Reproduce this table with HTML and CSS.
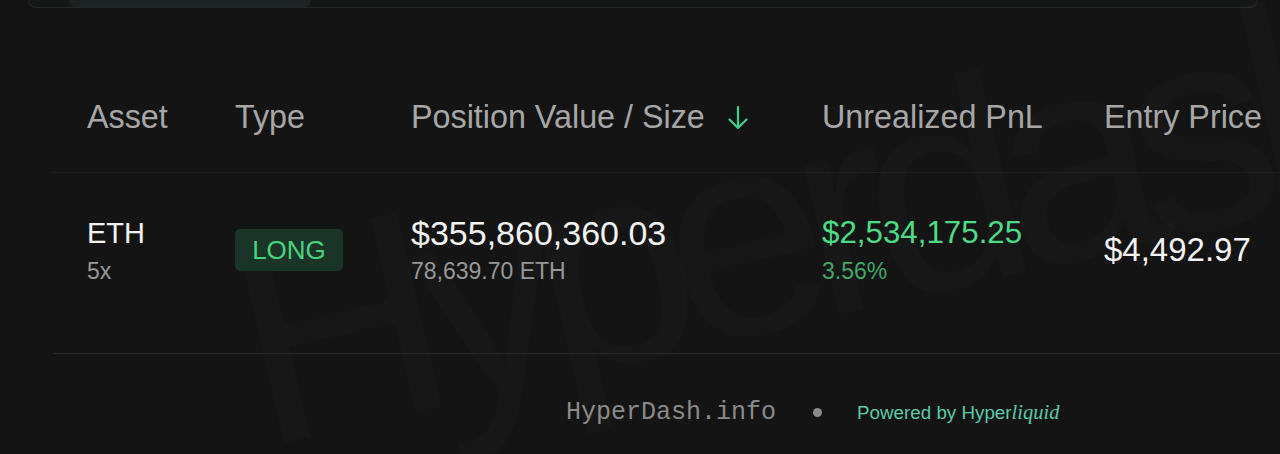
FILE: index.html
```html
<!DOCTYPE html>
<html>
<head>
<meta charset="utf-8">
<link rel="stylesheet" href="styles.css">
</head>
<body>
<div class="page">
  <div class="watermark">Hyperdash</div>
  <div class="topcard"><div class="tab"></div></div>
  <div class="table">
    <div class="row head">
      <div class="cell">Asset</div>
      <div class="cell">Type</div>
      <div class="cell sort">Position Value / Size
        <svg class="arrow" width="22" height="26" viewBox="0 0 22 26"><path d="M11 2 V23 M2.5 14.5 L11 23 L19.5 14.5" fill="none" stroke="#3ecf8e" stroke-width="2.2" stroke-linecap="round" stroke-linejoin="round"/></svg>
      </div>
      <div class="cell">Unrealized PnL</div>
      <div class="cell">Entry Price</div>
    </div>
    <div class="row data">
      <div class="cell stack">
        <div class="main sym">ETH</div>
        <div class="sub">5x</div>
      </div>
      <div class="cell"><span class="badge">LONG</span></div>
      <div class="cell stack">
        <div class="main big">$355,860,360.03</div>
        <div class="sub">78,639.70 ETH</div>
      </div>
      <div class="cell stack">
        <div class="main green">$2,534,175.25</div>
        <div class="sub dgreen">3.56%</div>
      </div>
      <div class="cell"><span class="main price">$4,492.97</span></div>
    </div>
  </div>
  <div class="footer">
    <span class="site">HyperDash.info</span>
    <span class="dot"></span>
    <span class="powered">Powered by Hyper<i>liquid</i></span>
  </div>
</div>
</body>
</html>
```

FILE: styles.css
```css
html, body {
  margin: 0;
  padding: 0;
  background: #141414;
}
.page {
  position: relative;
  width: 1280px;
  height: 454px;
  overflow: hidden;
  background: #141414;
  font-family: "Liberation Sans", Arial, sans-serif;
}
.watermark {
  position: absolute;
  left: 238px;
  top: 205px;
  font-family: "Liberation Sans", Arial, sans-serif;
  font-size: 290px;
  line-height: 290px;
  letter-spacing: -26px;
  color: rgba(255, 255, 255, 0.015);
  transform: rotate(-13deg);
  transform-origin: left center;
  white-space: nowrap;
  pointer-events: none;
}
.topcard {
  height: 7px;
  margin: 0 22px 0 28px;
  border: 1px solid #262828;
  border-top: none;
  border-radius: 0 0 12px 12px;
  background: #151717;
  display: flex;
  padding-left: 40px;
}
.tab {
  width: 242px;
  height: 7px;
  background: #1d2322;
  border-radius: 0 0 10px 10px;
}
.table {
  margin-top: 54px;
  margin-left: 53px;
  position: relative;
}
.row {
  display: grid;
  grid-template-columns: 182px 176px 411px 282px 200px;
  align-items: center;
}
.cell {
  padding-left: 34px;
}
.cell:not(:first-child) {
  padding-left: 0;
}
.head {
  height: 110px;
  border-bottom: 1px solid #202020;
  color: #a6a6a6;
  font-size: 32.3px;
}
.sort {
  display: flex;
  align-items: center;
}
.arrow {
  margin-left: 22px;
  margin-top: 2px;
}
.data {
  padding-top: 42px;
  padding-bottom: 68px;
  border-bottom: 1px solid #2a2a2a;
}
.stack {
  display: flex;
  flex-direction: column;
}
.main {
  font-size: 31.3px;
  line-height: 36px;
  color: #f2f2f2;
}
.main.sym { font-size: 29px; }
.main.big { font-size: 34px; }
.main.price { font-size: 33px; }
.sub {
  font-size: 23px;
  line-height: 28px;
  margin-top: 6px;
  color: #979797;
}
.green { color: #4cdc86; }
.dgreen { color: #3fa868; }
.badge {
  display: inline-block;
  width: 108px;
  height: 42px;
  line-height: 42px;
  text-align: center;
  background: #1a3427;
  border-radius: 5px;
  color: #47d47e;
  font-size: 26px;
}
.footer {
  display: flex;
  align-items: center;
  padding-left: 566px;
  padding-top: 43px;
  height: 30px;
}
.site {
  font-family: "Liberation Mono", "DejaVu Sans Mono", monospace;
  font-size: 25px;
  color: #8a8a8a;
}
.dot {
  width: 9px;
  height: 9px;
  border-radius: 50%;
  background: #8a8a8a;
  margin-left: 37px;
  margin-right: 35px;
}
.powered {
  font-size: 18.8px;
  color: #5cc9a7;
}
.powered i {
  font-family: "Liberation Serif", "Times New Roman", serif;
  font-style: italic;
  font-size: 20.5px;
}
```
